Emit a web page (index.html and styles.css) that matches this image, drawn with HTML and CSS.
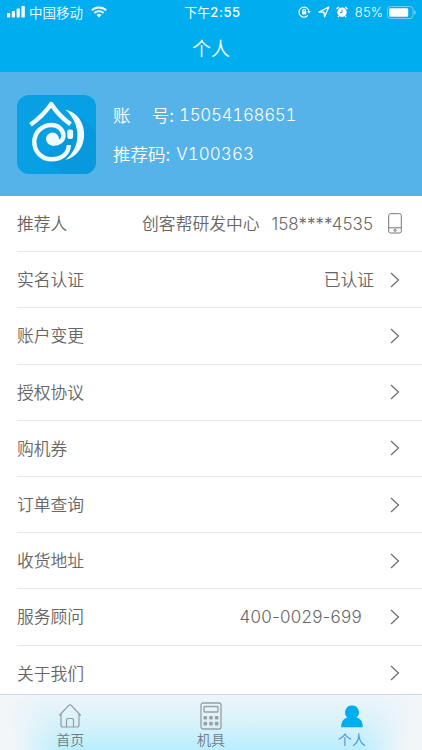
FILE: index.html
```html
<!DOCTYPE html>
<html lang="zh-CN">
<head>
<meta charset="utf-8">
<title>个人</title>
<link rel="stylesheet" href="styles.css">
</head>
<body>
<div class="app">
  <header class="top">
    <div class="status">
      <div class="status-left">
        <svg class="signal" width="18" height="12" viewBox="0 0 18 12" fill="#fff"><rect x="0" y="7" width="3.2" height="4.5" rx=".8"/><rect x="4.8" y="5" width="3.2" height="6.5" rx=".8"/><rect x="9.6" y="2.5" width="3.2" height="9" rx=".8"/><rect x="14.4" y="0" width="3.4" height="11.5" rx=".8"/></svg>
        <span class="carrier">中国移动</span>
        <svg class="wifi" width="16" height="12" viewBox="0 0 16 12" fill="none" stroke="#fff" stroke-width="1.9"><path d="M.8 4.4a10.3 10.3 0 0 1 14.4 0M3.4 7a6.6 6.6 0 0 1 9.2 0"/><path d="M8 11.5 5.6 9a3.5 3.5 0 0 1 4.8 0z" fill="#fff" stroke="none"/></svg>
      </div>
      <div class="time"><span>下午</span><span class="clock">2:55</span></div>
      <div class="status-right">
        <svg width="13" height="12" viewBox="0 0 13 12" fill="none" stroke="#fff" stroke-width="1.1"><path d="M10 9.2A5 5 0 1 1 11 6"/><path d="M9.3 5.2h3.4L11 7.6z" fill="#fff" stroke="none"/><rect x="4" y="5.2" width="4.2" height="3.2" fill="#fff" stroke="none"/><path d="M4.8 5.5v-1a1.3 1.3 0 0 1 2.6 0v1"/></svg>
        <svg class="location" width="12" height="12" viewBox="0 0 12 12" fill="none" stroke="#fff" stroke-width="1.3" stroke-linejoin="round"><path d="M1 6.1 10.8 1 6.6 10.8 6 6.1z"/></svg>
        <svg class="alarm" width="12" height="12" viewBox="0 0 12 12"><path d="M.6 3 2.8 1M11.4 3 9.2 1M2.900 10l-.8 1.200M9.100 10l.8 1.200" stroke="#fff" stroke-width="1.5"/><circle cx="6" cy="6.3" r="4.7" fill="#fff"/><path d="M6 3.6v3H4" fill="none" stroke="#00aeef" stroke-width="1"/></svg>
        <span class="percent">85%</span>
        <svg class="battery" width="29" height="13" viewBox="0 0 29 13"><rect x=".5" y=".5" width="25.5" height="12" rx="3" fill="none" stroke="#6ed0f5"/><rect x="2.2" y="2.2" width="19" height="8.6" rx="1.2" fill="#fff"/><path d="M27.3 4.3q1.4.6 1.4 2.2t-1.4 2.2z" fill="#8fdcf8"/></svg>
      </div>
    </div>
    <h1 class="title">个人</h1>
  </header>
  <section class="profile">
    <svg class="logo" width="79" height="79" viewBox="0 0 79 79"><rect width="79" height="79" rx="12" fill="#08a0e5"/><path d="M64 22 79 37v30a12 12 0 0 1-12 12H44L27 63z" fill="#0898dc"/><g fill="none" stroke="#effaff" stroke-width="4.400"><path stroke-linejoin="round" d="M13.500 29.800Q26 21 34.300 9Q41 20 53.500 29.300"/><path d="M35 48.500C42 49.500 46.500 45 46.500 40.500C46 34 40.500 30 34.500 30C25 30 17.300 37.500 17.300 47C17.300 57 25 64.300 34.500 64.300C44.500 64.300 51.500 59 51.800 50"/></g><circle cx="35.500" cy="44" r="6.500" fill="#effaff"/><path d="M48.300 14.500C73.500 20 73.500 59 48.300 65C64.500 52 64.500 29 48.300 14.500z" fill="#effaff"/><rect x="50.300" y="34.500" width="5.800" height="9.500" rx="2" fill="#effaff"/></svg>
    <div class="profile-info">
      <div class="info-line"><span class="account-label"><span>账</span><span>号:</span></span><span class="num account">15054168651</span></div>
      <div class="info-line"><span>推荐码:</span><span class="num code">V100363</span></div>
    </div>
  </section>
  <main class="list">
    <div class="row"><span class="label">推荐人</span><span class="value">创客帮研发中心</span><span class="num phone-num">158****4535</span><svg class="phone" width="14" height="21" viewBox="0 0 14 21" fill="none" stroke="#777"><rect x=".7" y=".7" width="12.600" height="19.300" rx="1.800"/><path d="M.7 14.800h12.600"/><circle cx="7" cy="17.300" r="1.100"/></svg></div>
    <div class="row"><span class="label">实名认证</span><span class="value">已认证</span><svg class="chevron" viewBox="0 0 10 16"><path d="m1 1 7.500 7L1 15"/></svg></div>
    <div class="row"><span class="label">账户变更</span><svg class="chevron" viewBox="0 0 10 16"><path d="m1 1 7.500 7L1 15"/></svg></div>
    <div class="row"><span class="label">授权协议</span><svg class="chevron" viewBox="0 0 10 16"><path d="m1 1 7.500 7L1 15"/></svg></div>
    <div class="row"><span class="label">购机券</span><svg class="chevron" viewBox="0 0 10 16"><path d="m1 1 7.500 7L1 15"/></svg></div>
    <div class="row"><span class="label">订单查询</span><svg class="chevron" viewBox="0 0 10 16"><path d="m1 1 7.500 7L1 15"/></svg></div>
    <div class="row"><span class="label">收货地址</span><svg class="chevron" viewBox="0 0 10 16"><path d="m1 1 7.500 7L1 15"/></svg></div>
    <div class="row"><span class="label">服务顾问</span><span class="num service">400-0029-699</span><svg class="chevron" viewBox="0 0 10 16"><path d="m1 1 7.500 7L1 15"/></svg></div>
    <div class="row"><span class="label">关于我们</span><svg class="chevron" viewBox="0 0 10 16"><path d="m1 1 7.500 7L1 15"/></svg></div>
  </main>
  <nav class="tabs">
    <div class="tab"><svg width="24" height="28" viewBox="0 0 24 28" fill="none" stroke="#969a9e" stroke-width="1.200" stroke-linejoin="round"><path d="M1.300 13.500 11 3.200q1-.8 2 0l9.700 10.300M3 12.200V23q0 2 2 2h14q2 0 2-2V12.200"/><path d="M8.500 25v-7q0-1.500 1.500-1.500h4q1.500 0 1.500 1.500v7"/></svg><span>首页</span></div>
    <div class="tab"><svg width="24" height="28" viewBox="0 0 24 28" fill="none" stroke="#9b9ea2" stroke-width="1.300"><rect x="2" y="1" width="20" height="26" rx="2"/><rect x="5" y="4.500" width="14" height="5.500" rx=".8"/><g fill="#9b9ea2" stroke="none"><rect x="4.500" y="14" width="3.600" height="3.600" rx="1"/><rect x="10.200" y="14" width="3.600" height="3.600" rx="1"/><rect x="15.900" y="14" width="3.600" height="3.600" rx="1"/><rect x="4.500" y="19.800" width="3.600" height="3.600" rx="1"/><rect x="10.200" y="19.800" width="3.600" height="3.600" rx="1"/><rect x="15.900" y="19.800" width="3.600" height="3.600" rx="1"/></g></svg><span>机具</span></div>
    <div class="tab active"><svg width="24" height="28" viewBox="0 0 24 28" fill="#00aeef"><path d="M12 3.500a6.800 6.800 0 0 0-4.500 12C3.200 17 1.200 19.500 1.200 25.200h21.600c0-5.700-2-8.200-6.300-9.700A6.800 6.800 0 0 0 12 3.500z"/></svg><span>个人</span></div>
  </nav>
</div>
</body>
</html>
```
FILE: styles.css
```css
* { box-sizing: border-box; }
body { margin: 0; background: #fff; font-family: "Noto Sans CJK SC", sans-serif; font-weight: 350; color: #666; }
svg { display: block; flex: none; }
.app { width: 422px; height: 750px; overflow: hidden; display: flex; flex-direction: column; }
.top { height: 72px; flex: none; background: #00aeef; color: #fff; }
.status { height: 24px; display: grid; grid-template-columns: 1fr 60px 1fr; align-items: center; line-height: 24px; }
.status-left { display: flex; align-items: center; padding-left: 7px; }
.carrier { font-size: 13.5px; margin-left: 4px; }
.wifi { margin-left: 8px; }
.time { display: flex; justify-content: center; white-space: nowrap; font-size: 13px; font-weight: 400; padding-left: 3px; }
.clock { font-family: Inter, sans-serif; font-size: 13px; font-weight: 500; letter-spacing: .6px; }
.status-right { display: flex; align-items: center; justify-content: flex-end; padding-right: 6px; }
.location { margin-left: 7px; }
.alarm { margin-left: 6px; }
.percent { font: 300 13px/24px Inter, sans-serif; margin-left: 7px; letter-spacing: .1px; }
.battery { margin-left: 4px; }
.title { margin: 0; font-size: 19px; font-weight: 350; text-align: center; line-height: 47px; }
.profile { height: 124px; flex: none; background: #56b3e9; color: #fff; display: flex; align-items: center; padding-left: 17px; }
.profile-info { margin-left: 17px; font-size: 17.500px; }
.info-line { height: 39px; display: flex; align-items: center; }
.info-line > span:first-child { padding-bottom: 1px; }
.account-label { width: 61px; display: flex; justify-content: space-between; }
.num { font-family: Inter, sans-serif; font-size: 17px; font-weight: 350; }
.account, .code { font-variant-numeric: tabular-nums; }
.account { margin-left: 5px; letter-spacing: -.35px; }
.code { margin-left: 6px; letter-spacing: .05px; }
.list { height: 498px; flex: none; overflow: hidden; }
.row { height: 56.2px; margin-left: 17px; padding-right: 22px; border-bottom: 1.500px solid #e7e7e7; display: flex; align-items: center; font-size: 16.800px; }
.label { flex: 1; padding-bottom: 1px; }
.value { padding-bottom: 1px; }
.phone-num { margin-left: 12px; }
.phone { margin: 0 -2px 0 15px; }
.chevron { width: 10px; height: 16px; margin-left: 16px; fill: none; stroke: #6b6b6b; stroke-width: 1.200; }
.service { margin-right: 12px; letter-spacing: .25px; }
.tabs { height: 56px; flex: none; border-top: 1px solid #d3dade; display: grid; grid-template-columns: repeat(3, 1fr); background: linear-gradient(72deg, #f3f6f9 15px, #f3f6f900 58px), linear-gradient(-72deg, #f3f6f9 15px, #f3f6f900 58px), linear-gradient(#edf5f9, #d9f2fb 50%, #b9eefe); }
.tab { display: flex; flex-direction: column; align-items: center; padding-top: 7px; font-size: 14px; line-height: 18px; color: #737b80; }
.active { color: #3a8fdc; }
```
